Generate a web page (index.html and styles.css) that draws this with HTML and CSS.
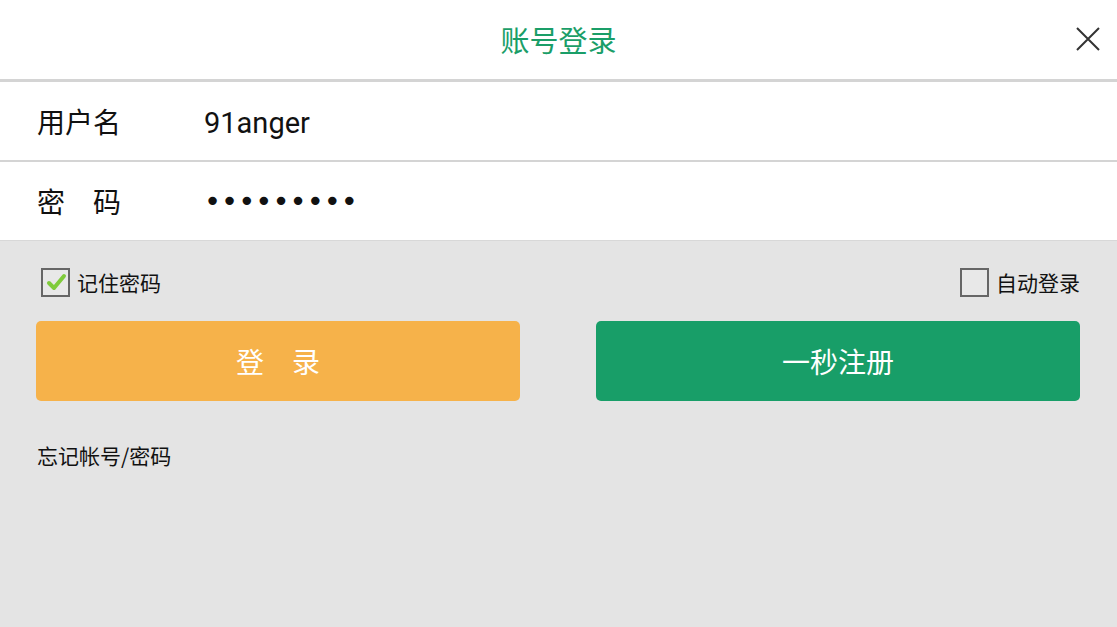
FILE: index.html
```html
<!DOCTYPE html>
<html lang="zh">
<head>
<meta charset="utf-8">
<link rel="stylesheet" href="styles.css">
</head>
<body>
<div class="page">
  <header class="header">
    <h1 class="title">账号登录</h1>
    <button class="close" aria-label="关闭">
      <svg width="24" height="24" viewBox="0 0 24 24"><path d="M1 1L23 23M23 1L1 23" stroke="#333" stroke-width="2" fill="none"/></svg>
    </button>
  </header>
  <div class="form">
    <div class="row"><span class="label">用户名</span><span class="value">91anger</span></div>
    <div class="row"><span class="label">密　码</span><span class="value dots">•••••••••</span></div>
  </div>
  <div class="options">
    <label class="check"><span class="box checked"><svg width="22" height="22" viewBox="0 0 22 22"><path d="M4 12L9 17L19 5" stroke="#7fcb3b" stroke-width="4" fill="none" stroke-linecap="round" stroke-linejoin="round"/></svg></span>记住密码</label>
    <label class="check"><span class="box"></span>自动登录</label>
  </div>
  <div class="buttons">
    <button class="btn login">登　录</button>
    <button class="btn register">一秒注册</button>
  </div>
  <a class="forgot">忘记帐号/密码</a>
</div>
</body>
</html>
```
FILE: styles.css
```css
* { box-sizing: border-box; }
html, body { margin: 0; padding: 0; }
body {
  width: 1117px; height: 627px; overflow: hidden;
  background: #e4e4e4;
  font-family: "Noto Sans CJK SC", Roboto, "Noto Sans", sans-serif;
}
.header {
  height: 82px; background: #fff;
  display: flex; align-items: center; justify-content: center;
  position: relative;
  border-bottom: 3px solid #d4d4d4;
}
.title {
  margin: 0 0 2px; font-size: 29px; font-weight: 400; color: #1a9e68;
  letter-spacing: 0;
}
.close {
  position: absolute; right: 17px; top: 27px;
  border: 0; background: none; padding: 0; width: 24px; height: 24px;
}
.form { background: #fff; }
.row {
  height: 80px; display: flex; align-items: center;
  padding-left: 37px;
  border-bottom: 2px solid #d4d4d4;
}
.row:last-child { border-bottom: 1px solid #d8d8d8; height: 79px; }
.label { width: 167px; font-size: 28px; color: #111; }
.value { font-family: Roboto, sans-serif; font-size: 29px; color: #111; padding-top: 3px; }
.dots { font-family: "DejaVu Sans", sans-serif; font-size: 29px; letter-spacing: 0; padding-top: 0; }
.options {
  display: flex; justify-content: space-between; align-items: center;
  padding: 26px 37px 0 41px; height: 56px;
}
.check { display: flex; align-items: center; font-size: 21px; color: #111; }
.box {
  width: 29px; height: 29px; border: 2px solid #666; background: #e8e8e8;
  margin-right: 7px; display: flex; align-items: center; justify-content: center;
}
.buttons {
  display: flex; justify-content: space-between;
  padding: 24px 37px 0 36px;
}
.btn {
  width: 484px; height: 80px; border: 0; border-radius: 5px;
  color: #fff; font-size: 28px; font-family: inherit;
}
.login { background: #f6b24a; }
.register { background: #189e68; }
.forgot {
  display: block; margin: 39px 0 0 37px; font-size: 21px; color: #111;
}
```
